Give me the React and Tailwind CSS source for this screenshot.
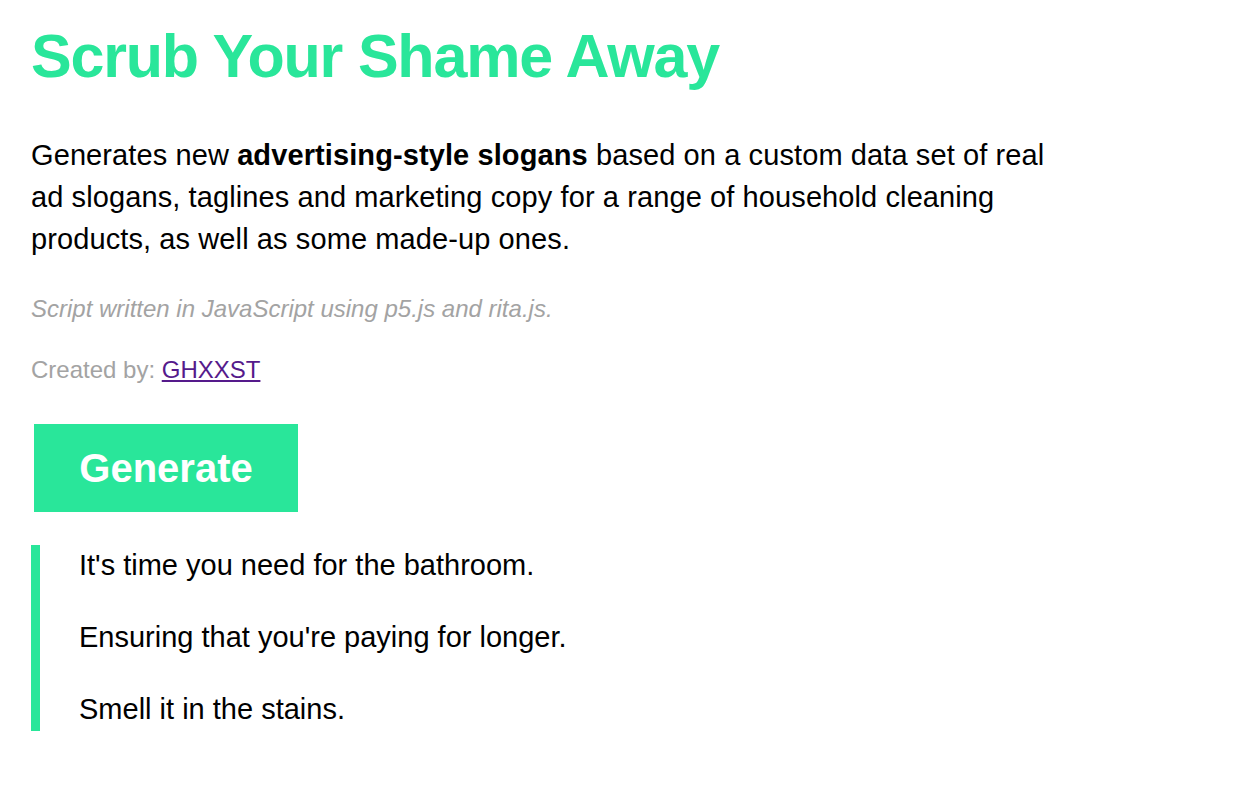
export default function App() {
  const slogans = [
    "It's time you need for the bathroom.",
    "Ensuring that you're paying for longer.",
    "Smell it in the stains.",
  ];

  return (
    <div className="min-h-screen bg-white px-[31px] pt-[21px] text-black font-['Liberation_Sans',Arial,sans-serif]">
      <h1 className="text-[61px] font-bold leading-[70px] tracking-[-1.2px] text-[#29e69a]">Scrub Your Shame Away</h1>

      <p className="mt-[43px] max-w-[1050px] text-[29px] leading-[42px] tracking-[0.1px]">
        Generates new <strong className="font-bold">advertising-style slogans</strong> based on a custom data set of real
        ad slogans, taglines and marketing copy for a range of household cleaning products, as well as some made-up ones.
      </p>

      <p className="mt-[34px] text-[24px] leading-[30px] italic text-[#a3a3a3]">
        Script written in JavaScript using p5.js and rita.js.
      </p>

      <p className="mt-[31px] text-[24px] leading-[30px] text-[#a3a3a3]">
        Created by: <a href="#" className="text-[#551a8b] underline">GHXXST</a>
      </p>

      <button className="mt-[39px] ml-[3px] block h-[88px] w-[264px] bg-[#29e69a] text-[40px] font-bold text-white">
        Generate
      </button>

      <div className="mt-[33px] flex flex-col gap-[39px] border-l-[9px] border-[#29e69a] pt-[4px] pb-[5px] pl-[39px]">
        {slogans.map((s) => (
          <p key={s} className="text-[29px] leading-[33px]">{s}</p>
        ))}
      </div>
    </div>
  );
}
